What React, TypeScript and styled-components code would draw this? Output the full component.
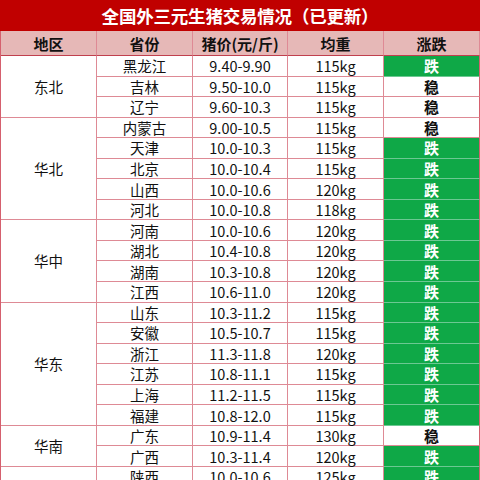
import React from "react";
import styled, { createGlobalStyle } from "styled-components";

const GlobalStyle = createGlobalStyle`
  html, body { margin: 0; padding: 0; overflow: hidden; background: #fff; }
  body { font-family: "Microsoft YaHei", "Noto Sans CJK SC", "Noto Sans", sans-serif; }
`;

const Page = styled.div`
  width: 480px;
  height: 480px;
  overflow: hidden;
  background: #fff;
`;

const Title = styled.div`
  height: 31px;
  background: #c00000;
  color: #fff;
  font-weight: 700;
  font-size: 17.5px;
  display: flex;
  align-items: center;
  justify-content: center;
  letter-spacing: -0.2px;
`;

const Table = styled.div`
  display: grid;
  grid-template-columns: 96px 96px 95px 96px 96px;
  grid-template-rows: 25px;
  grid-auto-rows: 20.55px;
  border-left: 1px solid #d5606e;
  width: 479px;
  box-sizing: border-box;
`;

const Cell = styled.div<{ $span?: number }>`
  box-sizing: border-box;
  display: flex;
  align-items: center;
  justify-content: center;
  border-right: 1px solid #de8a95;
  border-bottom: 1px solid #de8a95;
  font-size: 14.5px;
  color: #111;
  white-space: nowrap;
  ${(p) => (p.$span ? `grid-row: span ${p.$span};` : "")}
`;

const HeaderCell = styled(Cell)`
  background: #e6b8b7;
  font-weight: 700;
  font-size: 15px;
  border-bottom: 1px solid #c0404e;
`;

const TrendCell = styled(Cell)<{ $down: boolean }>`
  background: ${(p) => (p.$down ? "#0fa847" : "#fff")};
  color: ${(p) => (p.$down ? "#fff" : "#111")};
  font-weight: 700;
  font-size: 15px;
  border-bottom-color: ${(p) => (p.$down ? "#6cc892" : "#de8a95")};
  border-right-color: #d5606e;
`;

type Row = [string, string, string, boolean];
type Region = { name: string; rows: Row[] };

const regions: Region[] = [
  {
    name: "东北",
    rows: [
      ["黑龙江", "9.40-9.90", "115kg", true],
      ["吉林", "9.50-10.0", "115kg", false],
      ["辽宁", "9.60-10.3", "115kg", false],
    ],
  },
  {
    name: "华北",
    rows: [
      ["内蒙古", "9.00-10.5", "115kg", false],
      ["天津", "10.0-10.3", "115kg", true],
      ["北京", "10.0-10.4", "115kg", true],
      ["山西", "10.0-10.6", "120kg", true],
      ["河北", "10.0-10.8", "118kg", true],
    ],
  },
  {
    name: "华中",
    rows: [
      ["河南", "10.0-10.6", "120kg", true],
      ["湖北", "10.4-10.8", "120kg", true],
      ["湖南", "10.3-10.8", "120kg", true],
      ["江西", "10.6-11.0", "120kg", true],
    ],
  },
  {
    name: "华东",
    rows: [
      ["山东", "10.3-11.2", "115kg", true],
      ["安徽", "10.5-10.7", "115kg", true],
      ["浙江", "11.3-11.8", "120kg", true],
      ["江苏", "10.8-11.1", "115kg", true],
      ["上海", "11.2-11.5", "115kg", true],
      ["福建", "10.8-12.0", "115kg", true],
    ],
  },
  {
    name: "华南",
    rows: [
      ["广东", "10.9-11.4", "130kg", false],
      ["广西", "10.3-11.4", "120kg", true],
    ],
  },
  {
    name: "西北",
    rows: [
      ["陕西", "10.0-10.6", "125kg", true],
      ["甘肃", "10.0-10.5", "120kg", true],
      ["新疆", "9.80-10.3", "120kg", true],
    ],
  },
];

export default function App() {
  return (
    <Page>
      <GlobalStyle />
      <Title>全国外三元生猪交易情况（已更新）</Title>
      <Table>
        <HeaderCell>地区</HeaderCell>
        <HeaderCell>省份</HeaderCell>
        <HeaderCell>猪价(元/斤)</HeaderCell>
        <HeaderCell>均重</HeaderCell>
        <HeaderCell>涨跌</HeaderCell>
        {regions.map((r) => (
          <React.Fragment key={r.name}>
            <Cell $span={r.rows.length}>{r.name}</Cell>
            {r.rows.map(([prov, price, weight, down], i) => (
              <React.Fragment key={prov}>
                <Cell style={{ gridColumn: 2 }}>{prov}</Cell>
                <Cell>{price}</Cell>
                <Cell>{weight}</Cell>
                <TrendCell $down={down}>{down ? "跌" : "稳"}</TrendCell>
              </React.Fragment>
            ))}
          </React.Fragment>
        ))}
      </Table>
    </Page>
  );
}
